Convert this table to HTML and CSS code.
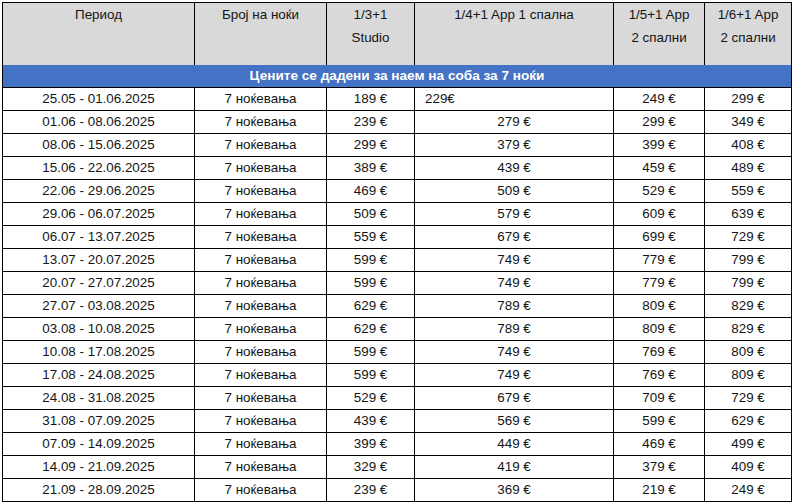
FILE: index.html
```html
<!DOCTYPE html>
<html>
<head>
<meta charset="utf-8">
<link rel="stylesheet" href="styles.css">
</head>
<body>
<div class="wrap">
<table class="prices">
  <colgroup>
    <col class="c1"><col class="c2"><col class="c3"><col class="c4"><col class="c5"><col class="c6">
  </colgroup>
  <thead>
    <tr class="head">
      <th>Период</th>
      <th>Број на ноќи</th>
      <th>1/3+1<br>Studio</th>
      <th>1/4+1 App 1 спална</th>
      <th>1/5+1 App<br>2 спални</th>
      <th>1/6+1 App<br>2 спални</th>
    </tr>
    <tr class="banner">
      <th colspan="6">Цените се дадени за наем на соба за 7 ноќи</th>
    </tr>
  </thead>
  <tbody>
    <tr><td>25.05 - 01.06.2025</td><td>7 ноќевања</td><td>189 €</td><td class="left">229€</td><td>249 €</td><td>299 €</td></tr>
    <tr><td>01.06 - 08.06.2025</td><td>7 ноќевања</td><td>239 €</td><td>279 €</td><td>299 €</td><td>349 €</td></tr>
    <tr><td>08.06 - 15.06.2025</td><td>7 ноќевања</td><td>299 €</td><td>379 €</td><td>399 €</td><td>408 €</td></tr>
    <tr><td>15.06 - 22.06.2025</td><td>7 ноќевања</td><td>389 €</td><td>439 €</td><td>459 €</td><td>489 €</td></tr>
    <tr><td>22.06 - 29.06.2025</td><td>7 ноќевања</td><td>469 €</td><td>509 €</td><td>529 €</td><td>559 €</td></tr>
    <tr><td>29.06 - 06.07.2025</td><td>7 ноќевања</td><td>509 €</td><td>579 €</td><td>609 €</td><td>639 €</td></tr>
    <tr><td>06.07 - 13.07.2025</td><td>7 ноќевања</td><td>559 €</td><td>679 €</td><td>699 €</td><td>729 €</td></tr>
    <tr><td>13.07 - 20.07.2025</td><td>7 ноќевања</td><td>599 €</td><td>749 €</td><td>779 €</td><td>799 €</td></tr>
    <tr><td>20.07 - 27.07.2025</td><td>7 ноќевања</td><td>599 €</td><td>749 €</td><td>779 €</td><td>799 €</td></tr>
    <tr><td>27.07 - 03.08.2025</td><td>7 ноќевања</td><td>629 €</td><td>789 €</td><td>809 €</td><td>829 €</td></tr>
    <tr><td>03.08 - 10.08.2025</td><td>7 ноќевања</td><td>629 €</td><td>789 €</td><td>809 €</td><td>829 €</td></tr>
    <tr><td>10.08 - 17.08.2025</td><td>7 ноќевања</td><td>599 €</td><td>749 €</td><td>769 €</td><td>809 €</td></tr>
    <tr><td>17.08 - 24.08.2025</td><td>7 ноќевања</td><td>599 €</td><td>749 €</td><td>769 €</td><td>809 €</td></tr>
    <tr><td>24.08 - 31.08.2025</td><td>7 ноќевања</td><td>529 €</td><td>679 €</td><td>709 €</td><td>729 €</td></tr>
    <tr><td>31.08 - 07.09.2025</td><td>7 ноќевања</td><td>439 €</td><td>569 €</td><td>599 €</td><td>629 €</td></tr>
    <tr><td>07.09 - 14.09.2025</td><td>7 ноќевања</td><td>399 €</td><td>449 €</td><td>469 €</td><td>499 €</td></tr>
    <tr><td>14.09 - 21.09.2025</td><td>7 ноќевања</td><td>329 €</td><td>419 €</td><td>379 €</td><td>409 €</td></tr>
    <tr><td>21.09 - 28.09.2025</td><td>7 ноќевања</td><td>239 €</td><td>369 €</td><td>219 €</td><td>249 €</td></tr>
  </tbody>
</table>
</div>
</body>
</html>
```
FILE: styles.css
```css
html, body {
  margin: 0;
  padding: 0;
  background: #ffffff;
}
.wrap {
  padding: 2px 0 0 2px;
}
.prices {
  border-collapse: collapse;
  table-layout: fixed;
  width: 789px;
  font-family: "Liberation Sans", Arial, sans-serif;
  font-size: 13.4px;
  color: #151515;
}
.c1 { width: 192px; }
.c2 { width: 132px; }
.c3 { width: 88px; }
.c4 { width: 199px; }
.c5 { width: 91px; }
.c6 { width: 87px; }
.prices th, .prices td {
  border: 1px solid #000;
  padding: 0;
  text-align: center;
  white-space: nowrap;
  overflow: hidden;
}
.head th {
  background: #d9d9d9;
  font-weight: normal;
  vertical-align: top;
  line-height: 23px;
  height: 62px;
  border-bottom: none;
}
.banner th {
  background: #4472c4;
  color: #ffffff;
  font-weight: bold;
  font-size: 13.6px;
  height: 22px;
  line-height: 22px;
  border-top: none;
}
.prices td {
  height: 22px;
  line-height: 22px;
}
.prices td.left {
  text-align: left;
  padding-left: 10px;
}
```
